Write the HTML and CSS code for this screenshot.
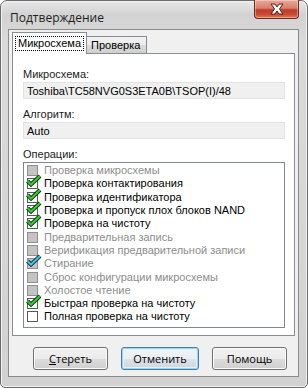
FILE: index.html
```html
<!DOCTYPE html>
<html>
<head>
    <meta charset="utf-8">
    <title>Подтверждение</title>
    <link rel="stylesheet" href="styles.css">
</head>
<body>
    <div class="wnd">
        <div class="caption">
            <span class="caption-text">Подтверждение</span>
            <div class="close-btn">
                <svg width="20" height="12" viewBox="0 0 20 12">
                    <path d="M4 1 L8 1 L10 4 L12 1 L16 1 L12.5 6 L16 11 L12 11 L10 8 L8 11 L4 11 L7.5 6 Z" fill="#fff" stroke="#5a1e14" stroke-width="1" stroke-linejoin="round"/>
                </svg>
            </div>
        </div>
        <div class="client">
            <div class="tabs">
                <div class="tab tab-active"><span class="focus">Микросхема</span></div>
                <div class="tab">Проверка</div>
            </div>
            <div class="panel">
                <div class="lbl">Микросхема:</div>
                <div class="field">Toshiba\TC58NVG0S3ETA0B\TSOP(I)/48</div>
                <div class="lbl lbl-gap">Алгоритм:</div>
                <div class="field">Auto</div>
                <div class="lbl lbl-gap">Операции:</div>
                <div class="list">
                    <div class="item off"><span class="cb cb-gray"></span>Проверка микросхемы</div>
                    <div class="item"><span class="cb cb-green"></span>Проверка контактирования</div>
                    <div class="item"><span class="cb cb-green"></span>Проверка идентификатора</div>
                    <div class="item"><span class="cb cb-green"></span>Проверка и пропуск плох блоков NAND</div>
                    <div class="item"><span class="cb cb-green"></span>Проверка на чистоту</div>
                    <div class="item off"><span class="cb cb-gray"></span>Предварительная запись</div>
                    <div class="item off"><span class="cb cb-gray"></span>Верификация предварительной записи</div>
                    <div class="item off"><span class="cb cb-gray cb-blue"></span>Стирание</div>
                    <div class="item off"><span class="cb cb-gray"></span>Сброс конфигурации микросхемы</div>
                    <div class="item off"><span class="cb cb-gray"></span>Холостое чтение</div>
                    <div class="item"><span class="cb cb-green"></span>Быстрая проверка на чистоту</div>
                    <div class="item"><span class="cb"></span>Полная проверка на чистоту</div>
                </div>
            </div>
            <div class="buttons">
                <div class="btn"><u>С</u>тереть</div>
                <div class="btn btn-default">Отменить</div>
                <div class="btn">Помощь</div>
            </div>
        </div>
    </div>
</body>
</html>
```

FILE: styles.css
```css
html, body {
    margin: 0;
    padding: 0;
    width: 308px;
    height: 388px;
    overflow: hidden;
    background: #fff;
}

.wnd {
    width: 308px;
    height: 388px;
    box-sizing: border-box;
    border: 1px solid #6b6b6b;
    border-radius: 7px 7px 5px 5px;
    background: linear-gradient(180deg, #e8e8e8 0, #d2d2d2 14px, #dadada 40px, #d2d2d2 100%);
    box-shadow: inset 0 0 0 1px #f2f2f2;
    display: flex;
    flex-direction: column;
    padding: 0 8px 10px 7px;
    font-family: "Liberation Sans", Arial, sans-serif;
    font-size: 11px;
    color: #000;
}

.caption {
    height: 28px;
    display: flex;
    align-items: flex-start;
    justify-content: space-between;
}

.caption-text {
    font-family: "Open Sans", "Noto Sans", sans-serif;
    font-size: 12px;
    margin-top: 8px;
    margin-left: 2px;
    color: #1e1e1e;
}

.close-btn {
    width: 45px;
    height: 19px;
    margin-top: -1px;
    box-sizing: border-box;
    border: 1px solid #6e2a1f;
    border-top: none;
    border-radius: 0 0 4px 4px;
    background: linear-gradient(180deg, #e9a899 0, #d9806c 45%, #c0392a 55%, #c84a35 80%, #e07a52 100%);
    box-shadow: inset 0 0 0 1px rgba(255,255,255,0.35);
    display: flex;
    align-items: center;
    justify-content: center;
}

.client {
    flex: 1;
    background: #f0f0f0;
    border: 1px solid #8a8a8a;
    display: flex;
    flex-direction: column;
    padding: 2px 3px 0 3px;
}

.tabs {
    display: flex;
    align-items: flex-end;
    height: 21px;
    position: relative;
    z-index: 1;
}

.tab {
    height: 17px;
    box-sizing: border-box;
    border: 1px solid #898c95;
    border-bottom: none;
    border-left: none;
    background: linear-gradient(180deg, #f2f2f2 0, #ebebeb 50%, #dddddd 51%, #cfcfcf 100%);
    padding: 2px 6px 0 4px;
}

.tab-active {
    height: 22px;
    border-left: 1px solid #898c95;
    background: #fff;
    padding: 3px 2px 0 2px;
    margin-bottom: -1px;
}

.focus {
    display: inline-block;
    border: 1px dotted #000;
    padding: 0 2px 1px 2px;
}

.panel {
    height: 283px;
    box-sizing: border-box;
    background: #fff;
    border: 1px solid #898c95;
    padding: 14px 9px 0 10px;
}

.lbl {
    color: #1c1c1c;
    height: 13px;
    line-height: 13px;
}

.lbl-gap {
    margin-top: 9px;
}

.field {
    height: 17px;
    box-sizing: border-box;
    margin-top: 1px;
    background: #f0f0f0;
    border: 1px solid #e3e3e3;
    padding: 1px 3px;
    line-height: 14px;
}

.list {
    margin-top: 1px;
    height: 166px;
    box-sizing: border-box;
    border: 1px solid #828790;
    background: #fff;
    padding: 1px 0 0 3px;
}

.item {
    height: 13.3px;
    line-height: 13px;
    display: flex;
    align-items: center;
    white-space: nowrap;
}

.off {
    color: #8d8d8d;
}

.cb {
    width: 9px;
    height: 9px;
    border: 1px solid #5a5a5a;
    background: #fff;
    margin-right: 6px;
    position: relative;
    flex: none;
}

.cb-gray {
    background: #c4c4c4;
    border-color: #8f8f8f;
}

.cb-green::after,
.cb-blue::after {
    content: "";
    position: absolute;
    left: -3px;
    top: -5px;
    width: 17px;
    height: 13px;
    background-repeat: no-repeat;
    background-image: url("data:image/svg+xml,%3Csvg xmlns='http://www.w3.org/2000/svg' width='17' height='13' viewBox='0 0 17 13'%3E%3Cpath d='M2.5 7 L6 10.5 L15 2' fill='none' stroke='%23163016' stroke-width='4' stroke-linejoin='miter'/%3E%3Cpath d='M2.5 7 L6 10.5 L15 2' fill='none' stroke='%2335d035' stroke-width='2'/%3E%3C/svg%3E");
}

.cb-blue::after {
    background-image: url("data:image/svg+xml,%3Csvg xmlns='http://www.w3.org/2000/svg' width='17' height='13' viewBox='0 0 17 13'%3E%3Cpath d='M2.5 7 L6 10.5 L15 2' fill='none' stroke='%23163040' stroke-width='4' stroke-linejoin='miter'/%3E%3Cpath d='M2.5 7 L6 10.5 L15 2' fill='none' stroke='%2340c8e8' stroke-width='2'/%3E%3C/svg%3E");
}

.buttons {
    display: flex;
    justify-content: flex-end;
    gap: 13px;
    padding: 11px 8px 0 0;
}

.btn {
    width: 75px;
    height: 23px;
    box-sizing: border-box;
    border: 1px solid #707070;
    border-radius: 3px;
    background: linear-gradient(180deg, #f2f2f2 0, #ebebeb 50%, #dddddd 51%, #cfcfcf 100%);
    box-shadow: inset 0 0 0 1px #fcfcfc;
    display: flex;
    align-items: center;
    justify-content: center;
    color: #000;
    font-family: "Open Sans", "Noto Sans", sans-serif;
    font-size: 11px;
}

.btn-default {
    width: 78px;
    border-color: #3c7fb1;
    background: linear-gradient(180deg, #f2f5f7 0, #eaeef1 50%, #dde3e8 51%, #cfd6dc 100%);
    box-shadow: inset 0 0 0 1px #9fd3f0, inset 0 0 0 2px #dff1fb;
}

.btn u {
    text-decoration: underline;
}
```
